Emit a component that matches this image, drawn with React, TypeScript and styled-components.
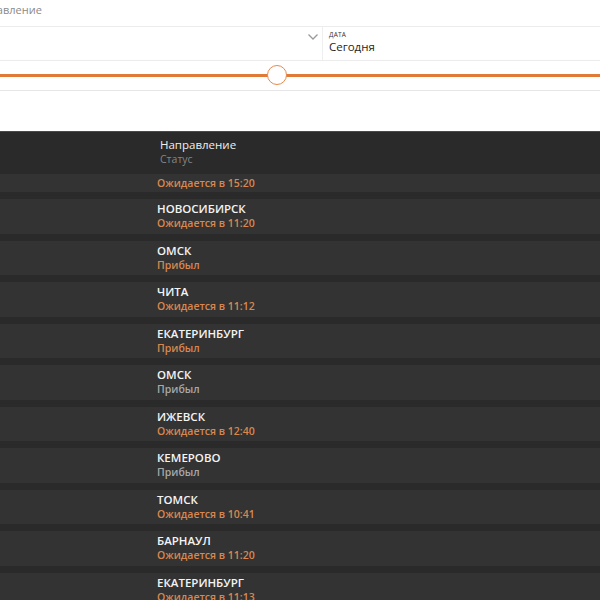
import React from "react";
import styled, { createGlobalStyle } from "styled-components";

const GlobalStyle = createGlobalStyle`
  html, body {
    margin: 0;
    padding: 0;
    background: #2b2b2b;
    font-family: "Open Sans", "Noto Sans", sans-serif;
  }
  #root {
    width: 600px;
    height: 600px;
    overflow: hidden;
  }
`;

const Filters = styled.div`
  background: #ffffff;
  height: 131px;
  display: flex;
  flex-direction: column;
`;

const TopLabel = styled.div`
  height: 27px;
  padding-top: 3px;
  box-sizing: border-box;
  border-bottom: 1px solid #ececec;
  display: flex;
  align-items: flex-start;
  overflow: hidden;
  font-size: 11px;
  line-height: 14px;
  color: #8a8a8a;
  span {
    margin-left: -31px;
  }
`;

const SelectRow = styled.div`
  height: 33px;
  flex-shrink: 0;
  display: flex;
  border-bottom: 1px solid #ececec;
`;

const SelectField = styled.div`
  width: 323px;
  display: flex;
  justify-content: flex-end;
  align-items: flex-start;
  padding: 6px 3px 0 0;
  box-sizing: border-box;
  border-right: 1px solid #efefef;
`;

const DateField = styled.div`
  flex: 1;
  padding: 4px 0 0 6px;
  display: flex;
  flex-direction: column;
`;

const DateLabel = styled.span`
  font-size: 6.5px;
  line-height: 8px;
  color: #333;
  text-transform: uppercase;
  letter-spacing: 0.2px;
`;

const DateValue = styled.span`
  font-size: 11.5px;
  line-height: 16px;
  color: #1e1e1e;
`;

const SliderRow = styled.div`
  height: 29px;
  flex-shrink: 0;
  border-bottom: 1px solid #e6e6e6;
  display: flex;
  align-items: center;
`;

const Track = styled.div`
  flex: 1;
  height: 2.5px;
  background: #e07a36;
  position: relative;
`;

const Thumb = styled.div`
  position: absolute;
  left: 267px;
  top: -9px;
  width: 18px;
  height: 18px;
  border-radius: 50%;
  background: #fff;
  border: 1px solid #e58a4e;
`;

const Board = styled.div`
  border-top: 1px solid #4a4a4a;
  background: #2a2a2a;
`;

const BoardHead = styled.div`
  height: 42px;
  padding: 6px 0 0 160px;
  box-sizing: border-box;
  display: flex;
  flex-direction: column;
`;

const HeadTitle = styled.span`
  font-size: 11.5px;
  line-height: 14px;
  color: #eeeeee;
`;

const HeadSub = styled.span`
  font-size: 10.5px;
  line-height: 14px;
  color: #858585;
`;

const List = styled.div`
  display: flex;
  flex-direction: column;
  gap: 7px;
`;

const Row = styled.div<{ $partial?: boolean }>`
  background: #333333;
  height: ${(p) => (p.$partial ? "18px" : "34.5px")};
  padding: ${(p) => (p.$partial ? "0" : "2px")} 0 0 157px;
  box-sizing: border-box;
  display: flex;
  flex-direction: column;
  justify-content: ${(p) => (p.$partial ? "center" : "flex-start")};
`;

const City = styled.span`
  font-size: 11.5px;
  line-height: 15px;
  font-weight: 600;
  color: #f4f4f4;
  text-transform: uppercase;
`;

const Status = styled.span<{ $muted?: boolean }>`
  font-size: 10.5px;
  line-height: 15px;
  font-weight: 600;
  color: ${(p) => (p.$muted ? "#a8a8a8" : "#d9874f")};
`;

type Arrival = { city: string; status: string; muted?: boolean };

const arrivals: Arrival[] = [
  { city: "Новосибирск", status: "Ожидается в 11:20" },
  { city: "Омск", status: "Прибыл" },
  { city: "Чита", status: "Ожидается в 11:12" },
  { city: "Екатеринбург", status: "Прибыл" },
  { city: "Омск", status: "Прибыл", muted: true },
  { city: "Ижевск", status: "Ожидается в 12:40" },
  { city: "Кемерово", status: "Прибыл", muted: true },
  { city: "Томск", status: "Ожидается в 10:41" },
  { city: "Барнаул", status: "Ожидается в 11:20" },
  { city: "Екатеринбург", status: "Ожидается в 11:13" },
];

const Chevron = () => (
  <svg width="12" height="8" viewBox="0 0 12 8" fill="none">
    <path d="M1.5 1.5 L6 6 L10.5 1.5" stroke="#9a9a9a" strokeWidth="1.3" />
  </svg>
);

const App = () => {
  return (
    <>
      <GlobalStyle />
      <Filters>
        <TopLabel>
          <span>Направление</span>
        </TopLabel>
        <SelectRow>
          <SelectField>
            <Chevron />
          </SelectField>
          <DateField>
            <DateLabel>Дата</DateLabel>
            <DateValue>Сегодня</DateValue>
          </DateField>
        </SelectRow>
        <SliderRow>
          <Track>
            <Thumb />
          </Track>
        </SliderRow>
      </Filters>
      <Board>
        <BoardHead>
          <HeadTitle>Направление</HeadTitle>
          <HeadSub>Статус</HeadSub>
        </BoardHead>
        <List>
          <Row $partial>
            <Status>Ожидается в 15:20</Status>
          </Row>
          {arrivals.map((a, i) => (
            <Row key={i}>
              <City>{a.city}</City>
              <Status $muted={a.muted}>{a.status}</Status>
            </Row>
          ))}
        </List>
      </Board>
    </>
  );
};

export default App;
